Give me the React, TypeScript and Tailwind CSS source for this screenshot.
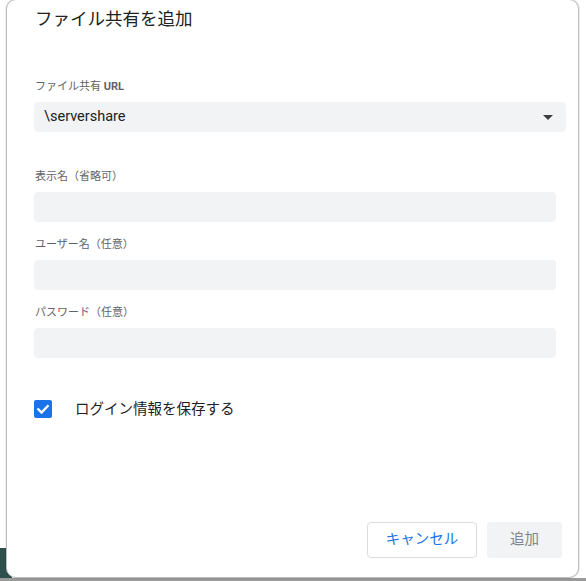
import React from "react";

function Label({ children }: { children: React.ReactNode }) {
  return (
    <div className="h-4 leading-4 text-[11px] text-[#5f6368] mb-[7px] pl-px">
      {children}
    </div>
  );
}

function Field() {
  return <div className="h-[30px] w-[522px] rounded-[4px] bg-[#f1f3f4]" />;
}

export default function App() {
  return (
    <div
      className="relative w-[586px] h-[581px] overflow-hidden bg-white pl-[6px]"
      style={{ fontFamily: '"Roboto", "Noto Sans CJK JP", sans-serif' }}
    >
      <div className="absolute left-0 bottom-0 w-[12px] h-[33px] bg-[#2f4f4c]" />
      <div className="absolute left-0 bottom-0 w-full h-[3px] bg-[#9a9a9a]" />
      <div className="relative flex flex-col w-[573px] h-[579px] -mt-px rounded-[10px] border-[1.5px] border-[#bdbdbd] bg-white pl-[27px] pr-[16px] pb-[19px] shadow-[0_0_2px_rgba(0,0,0,0.25)]">
        <div className="mt-[7px] h-6 leading-6 text-[17.5px] text-[#202124] pl-px">
          ファイル共有を追加
        </div>
        <div className="mt-[48px]">
          <Label>
            ファイル共有 <span className="font-bold">URL</span>
          </Label>
          <div className="flex items-center justify-between h-[30px] w-[532px] rounded-[4px] bg-[#f1f3f4] pl-[10px] pr-[13px]">
            <span className="text-[14.5px] text-[#202124]">\servershare</span>
            <svg width="10" height="5" viewBox="0 0 10 5">
              <path d="M0 0 L10 0 L5 5 Z" fill="#3c4043" />
            </svg>
          </div>
        </div>
        <div className="mt-[37px]">
          <Label>表示名（省略可）</Label>
          <Field />
        </div>
        <div className="mt-[15px]">
          <Label>ユーザー名（任意）</Label>
          <Field />
        </div>
        <div className="mt-[15px]">
          <Label>パスワード（任意）</Label>
          <Field />
        </div>
        <div className="mt-[42px] flex items-center h-[18px]">
          <div className="w-[18px] h-[18px] rounded-[2px] bg-[#1a73e8] flex items-center justify-center">
            <svg width="14" height="14" viewBox="0 0 24 24">
              <path
                d="M4 12.5 L9.5 18 L20 7"
                fill="none"
                stroke="white"
                strokeWidth="4"
                strokeLinecap="square"
              />
            </svg>
          </div>
          <span className="ml-[23px] text-[14.5px] text-[#202124] pt-[2px]">
            ログイン情報を保存する
          </span>
        </div>
        <div className="mt-auto flex justify-end gap-[10px]">
          <button className="h-9 w-[110px] rounded-[4px] border border-[#dadce0] bg-white text-[14.5px] text-[#1a73e8]">
            キャンセル
          </button>
          <button className="h-9 w-[75px] rounded-[4px] bg-[#f1f3f4] text-[14.5px] text-[#80868b]">
            追加
          </button>
        </div>
      </div>
    </div>
  );
}
